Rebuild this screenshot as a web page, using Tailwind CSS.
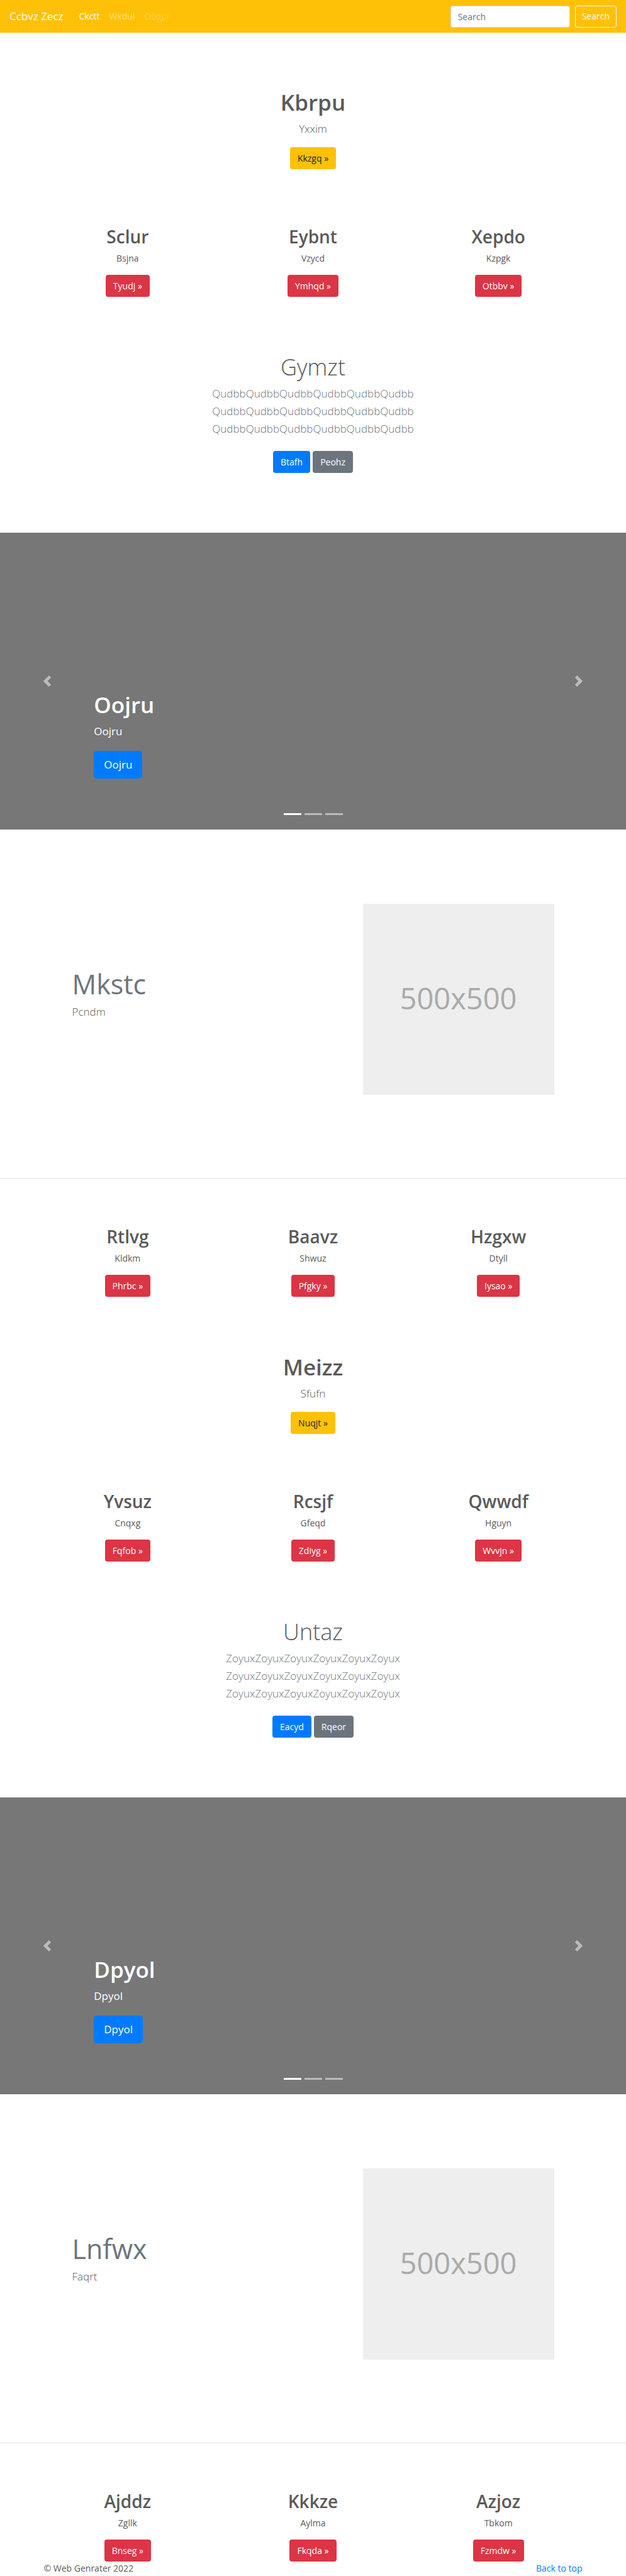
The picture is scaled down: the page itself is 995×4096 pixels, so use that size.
<!DOCTYPE html>
<html lang="en">
<head>
<meta charset="utf-8">
<meta name="viewport" content="width=device-width, initial-scale=1">
<title>Ccbvz Zecz</title>
<script src="https://cdn.jsdelivr.net/npm/@tailwindcss/browser@4"></script>
</head>
<body class="bg-white font-['Open_Sans','Noto_Sans',sans-serif] text-[14px] leading-[22px] text-[#5a5a5a]">

<header>
  <nav class="flex items-center bg-[#ffc107] px-[15px] h-[52px]">
    <a href="#" class="text-[17px] leading-[28px] text-white">Ccbvz Zecz</a>
    <div class="ml-[25px] flex gap-[15px]">
      <a href="#" class="text-white">Ckctt</a>
      <a href="#" class="text-white/50">Wxdul</a>
      <a href="#" class="text-white/25">Obgpi</a>
    </div>
    <form class="ml-auto flex gap-2">
      <input type="text" placeholder="Search" aria-label="Search" class="h-[35px] w-[190px] rounded border border-[#ced4da] bg-white px-[11px] text-[#495057] placeholder:text-[#6c757d]">
      <button type="button" class="h-[35px] rounded border border-[#f8f9fa] px-[10px] text-[#f8f9fa]">Search</button>
    </form>
  </nav>
</header>

<main>
  <section class="mt-[87px] text-center">
    <h1 class="mb-1 text-[35px] leading-[48px] font-semibold">Kbrpu</h1>
    <p class="mb-[15px] text-[17px] leading-[28px] font-light">Yxxim</p>
    <a href="#" class="inline-flex h-[35px] items-center rounded bg-[#ffc107] px-3 align-top text-[#212529]">Kkzgq »</a>
  </section>

  <section class="mx-auto mt-[88px] grid max-w-[884px] grid-cols-3 text-center">
    <div>
      <h2 class="mb-[5px] text-[28px] leading-[38px] font-semibold">Sclur</h2>
      <p class="mb-[15px]">Bsjna</p>
      <a href="#" class="inline-flex h-[35px] items-center rounded bg-[#dc3545] px-3 align-top text-white">Tyudj »</a>
    </div>
    <div>
      <h2 class="mb-[5px] text-[28px] leading-[38px] font-semibold">Eybnt</h2>
      <p class="mb-[15px]">Vzycd</p>
      <a href="#" class="inline-flex h-[35px] items-center rounded bg-[#dc3545] px-3 align-top text-white">Ymhqd »</a>
    </div>
    <div>
      <h2 class="mb-[5px] text-[28px] leading-[38px] font-semibold">Xepdo</h2>
      <p class="mb-[15px]">Kzpgk</p>
      <a href="#" class="inline-flex h-[35px] items-center rounded bg-[#dc3545] px-3 align-top text-white">Otbbv »</a>
    </div>
  </section>

  <section class="mt-[88px] text-center">
    <h1 class="mb-1 text-[36px] leading-[48px] font-light">Gymzt</h1>
    <p class="mb-[21px] text-[17px] leading-[28px] font-light text-[#6c757d]">QudbbQudbbQudbbQudbbQudbbQudbb<br>QudbbQudbbQudbbQudbbQudbbQudbb<br>QudbbQudbbQudbbQudbbQudbbQudbb</p>
    <div class="flex justify-center gap-1">
      <a href="#" class="flex h-[35px] items-center rounded bg-[#007bff] px-3 text-white">Btafh</a>
      <a href="#" class="flex h-[35px] items-center rounded bg-[#6c757d] px-3 text-white">Peohz</a>
    </div>
  </section>

  <section class="relative mt-[95px] flex h-[472px] flex-col justify-end bg-[#777] px-[15%] pb-[81px] text-white">
    <h1 class="mb-1 text-[35px] leading-[48px] font-semibold">Oojru</h1>
    <p class="mb-[17px] text-[17px] leading-[28px]">Oojru</p>
    <a href="#" class="flex h-[44px] items-center self-start rounded-[5px] bg-[#007bff] px-4 text-[17px]">Oojru</a>
    <button type="button" aria-label="Previous" class="absolute inset-y-0 left-0 flex w-[15%] items-center justify-center opacity-50">
      <svg class="size-[18px]" viewBox="0 0 8 8" fill="#fff"><path d="M5.25 0l-4 4 4 4 1.5-1.5-2.5-2.5 2.5-2.5-1.5-1.5z"/></svg>
    </button>
    <button type="button" aria-label="Next" class="absolute inset-y-0 right-0 flex w-[15%] items-center justify-center opacity-50">
      <svg class="size-[18px]" viewBox="0 0 8 8" fill="#fff"><path d="M2.75 0l-1.5 1.5 2.5 2.5-2.5 2.5 1.5 1.5 4-4-4-4z"/></svg>
    </button>
    <div class="absolute inset-x-0 bottom-[23px] flex justify-center gap-[5px]">
      <button type="button" aria-label="Slide 1" class="h-[3px] w-[28px] bg-white"></button>
      <button type="button" aria-label="Slide 2" class="h-[3px] w-[28px] bg-white/50"></button>
      <button type="button" aria-label="Slide 3" class="h-[3px] w-[28px] bg-white/50"></button>
    </div>
  </section>

  <section class="mx-auto mt-[118px] grid max-w-[792px] grid-cols-12">
    <div class="col-span-7 px-[13px] pt-[105px]">
      <h2 class="mb-[7px] text-[43px] leading-[46px] text-[#6c757d]">Mkstc</h2>
      <p class="text-[17px] leading-[28px] font-light">Pcndm</p>
    </div>
    <div class="col-span-5 px-[13px]">
      <div class="flex aspect-square items-center justify-center bg-[#eee] pb-1 text-[47px] text-[#aaa]">500x500</div>
    </div>
  </section>

  <hr class="mt-[132px] border-t border-[#e5e5e5]">

  <section class="mx-auto mt-[73px] grid max-w-[884px] grid-cols-3 text-center">
    <div>
      <h2 class="mb-[5px] text-[28px] leading-[38px] font-semibold">Rtlvg</h2>
      <p class="mb-[15px]">Kldkm</p>
      <a href="#" class="inline-flex h-[35px] items-center rounded bg-[#dc3545] px-3 align-top text-white">Phrbc »</a>
    </div>
    <div>
      <h2 class="mb-[5px] text-[28px] leading-[38px] font-semibold">Baavz</h2>
      <p class="mb-[15px]">Shwuz</p>
      <a href="#" class="inline-flex h-[35px] items-center rounded bg-[#dc3545] px-3 align-top text-white">Pfgky »</a>
    </div>
    <div>
      <h2 class="mb-[5px] text-[28px] leading-[38px] font-semibold">Hzgxw</h2>
      <p class="mb-[15px]">Dtyll</p>
      <a href="#" class="inline-flex h-[35px] items-center rounded bg-[#dc3545] px-3 align-top text-white">Iysao »</a>
    </div>
  </section>

  <section class="mt-[88px] text-center">
    <h1 class="mb-1 text-[35px] leading-[48px] font-semibold">Meizz</h1>
    <p class="mb-[15px] text-[17px] leading-[28px] font-light">Sfufn</p>
    <a href="#" class="inline-flex h-[35px] items-center rounded bg-[#ffc107] px-3 align-top text-[#212529]">Nuqjt »</a>
  </section>

  <section class="mx-auto mt-[88px] grid max-w-[884px] grid-cols-3 text-center">
    <div>
      <h2 class="mb-[5px] text-[28px] leading-[38px] font-semibold">Yvsuz</h2>
      <p class="mb-[15px]">Cnqxg</p>
      <a href="#" class="inline-flex h-[35px] items-center rounded bg-[#dc3545] px-3 align-top text-white">Fqfob »</a>
    </div>
    <div>
      <h2 class="mb-[5px] text-[28px] leading-[38px] font-semibold">Rcsjf</h2>
      <p class="mb-[15px]">Gfeqd</p>
      <a href="#" class="inline-flex h-[35px] items-center rounded bg-[#dc3545] px-3 align-top text-white">Zdiyg »</a>
    </div>
    <div>
      <h2 class="mb-[5px] text-[28px] leading-[38px] font-semibold">Qwwdf</h2>
      <p class="mb-[15px]">Hguyn</p>
      <a href="#" class="inline-flex h-[35px] items-center rounded bg-[#dc3545] px-3 align-top text-white">Wvvjn »</a>
    </div>
  </section>

  <section class="mt-[88px] text-center">
    <h1 class="mb-1 text-[36px] leading-[48px] font-light">Untaz</h1>
    <p class="mb-[21px] text-[17px] leading-[28px] font-light text-[#6c757d]">ZoyuxZoyuxZoyuxZoyuxZoyuxZoyux<br>ZoyuxZoyuxZoyuxZoyuxZoyuxZoyux<br>ZoyuxZoyuxZoyuxZoyuxZoyuxZoyux</p>
    <div class="flex justify-center gap-1">
      <a href="#" class="flex h-[35px] items-center rounded bg-[#007bff] px-3 text-white">Eacyd</a>
      <a href="#" class="flex h-[35px] items-center rounded bg-[#6c757d] px-3 text-white">Rqeor</a>
    </div>
  </section>

  <section class="relative mt-[95px] flex h-[472px] flex-col justify-end bg-[#777] px-[15%] pb-[81px] text-white">
    <h1 class="mb-1 text-[35px] leading-[48px] font-semibold">Dpyol</h1>
    <p class="mb-[17px] text-[17px] leading-[28px]">Dpyol</p>
    <a href="#" class="flex h-[44px] items-center self-start rounded-[5px] bg-[#007bff] px-4 text-[17px]">Dpyol</a>
    <button type="button" aria-label="Previous" class="absolute inset-y-0 left-0 flex w-[15%] items-center justify-center opacity-50">
      <svg class="size-[18px]" viewBox="0 0 8 8" fill="#fff"><path d="M5.25 0l-4 4 4 4 1.5-1.5-2.5-2.5 2.5-2.5-1.5-1.5z"/></svg>
    </button>
    <button type="button" aria-label="Next" class="absolute inset-y-0 right-0 flex w-[15%] items-center justify-center opacity-50">
      <svg class="size-[18px]" viewBox="0 0 8 8" fill="#fff"><path d="M2.75 0l-1.5 1.5 2.5 2.5-2.5 2.5 1.5 1.5 4-4-4-4z"/></svg>
    </button>
    <div class="absolute inset-x-0 bottom-[23px] flex justify-center gap-[5px]">
      <button type="button" aria-label="Slide 1" class="h-[3px] w-[28px] bg-white"></button>
      <button type="button" aria-label="Slide 2" class="h-[3px] w-[28px] bg-white/50"></button>
      <button type="button" aria-label="Slide 3" class="h-[3px] w-[28px] bg-white/50"></button>
    </div>
  </section>

  <section class="mx-auto mt-[118px] grid max-w-[792px] grid-cols-12">
    <div class="col-span-7 px-[13px] pt-[105px]">
      <h2 class="mb-[7px] text-[43px] leading-[46px] text-[#6c757d]">Lnfwx</h2>
      <p class="text-[17px] leading-[28px] font-light">Faqrt</p>
    </div>
    <div class="col-span-5 px-[13px]">
      <div class="flex aspect-square items-center justify-center bg-[#eee] pb-1 text-[47px] text-[#aaa]">500x500</div>
    </div>
  </section>

  <hr class="mt-[132px] border-t border-[#e5e5e5]">

  <section class="mx-auto mt-[73px] grid max-w-[884px] grid-cols-3 text-center">
    <div>
      <h2 class="mb-[5px] text-[28px] leading-[38px] font-semibold">Ajddz</h2>
      <p class="mb-[15px]">Zgllk</p>
      <a href="#" class="inline-flex h-[35px] items-center rounded bg-[#dc3545] px-3 align-top text-white">Bnseg »</a>
    </div>
    <div>
      <h2 class="mb-[5px] text-[28px] leading-[38px] font-semibold">Kkkze</h2>
      <p class="mb-[15px]">Aylma</p>
      <a href="#" class="inline-flex h-[35px] items-center rounded bg-[#dc3545] px-3 align-top text-white">Fkqda »</a>
    </div>
    <div>
      <h2 class="mb-[5px] text-[28px] leading-[38px] font-semibold">Azjoz</h2>
      <p class="mb-[15px]">Tbkom</p>
      <a href="#" class="inline-flex h-[35px] items-center rounded bg-[#dc3545] px-3 align-top text-white">Fzmdw »</a>
    </div>
  </section>
</main>

<footer class="mx-auto flex max-w-[884px] justify-between px-[14px]">
  <p>© Web Genrater 2022</p>
  <a href="#" class="text-[#007bff]">Back to top</a>
</footer>

</body>
</html>
